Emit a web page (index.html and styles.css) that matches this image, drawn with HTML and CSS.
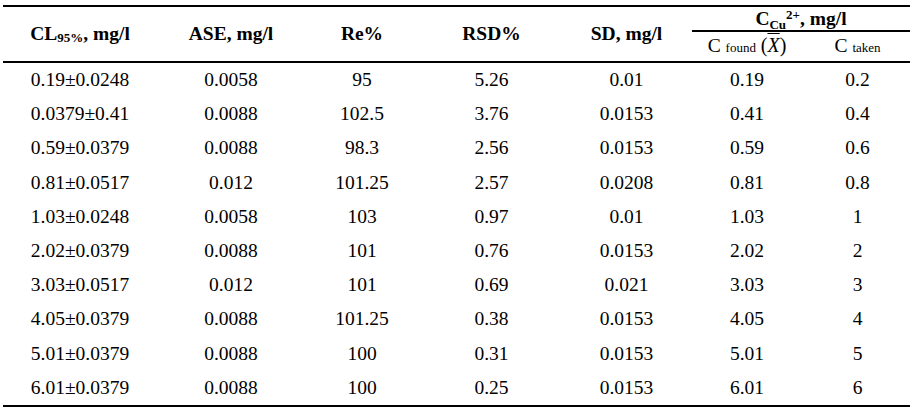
FILE: index.html
```html
<!DOCTYPE html>
<html>
<head>
<meta charset="utf-8">
<link rel="stylesheet" href="styles.css">
</head>
<body>
<table class="data">
  <colgroup>
    <col class="c1"><col class="c2"><col class="c3"><col class="c4"><col class="c5"><col class="c6"><col class="c7">
  </colgroup>
  <thead>
    <tr class="h1">
      <th rowspan="2">CL<sub class="sb">95%</sub>, mg/l</th>
      <th rowspan="2">ASE, mg/l</th>
      <th rowspan="2">Re%</th>
      <th rowspan="2">RSD%</th>
      <th rowspan="2">SD, mg/l</th>
      <th colspan="2" class="group"><div class="group-title">C<sub class="cu">Cu</sub><sup class="sp">2+</sup>, mg/l</div></th>
    </tr>
    <tr class="h2">
      <th class="sub">C <span class="small">found</span> <span class="math">(<span class="xbar">X</span>)</span></th>
      <th class="sub">C <span class="small">taken</span></th>
    </tr>
  </thead>
  <tbody>
    <tr><td>0.19±0.0248</td><td>0.0058</td><td>95</td><td>5.26</td><td>0.01</td><td>0.19</td><td>0.2</td></tr>
    <tr><td>0.0379±0.41</td><td>0.0088</td><td>102.5</td><td>3.76</td><td>0.0153</td><td>0.41</td><td>0.4</td></tr>
    <tr><td>0.59±0.0379</td><td>0.0088</td><td>98.3</td><td>2.56</td><td>0.0153</td><td>0.59</td><td>0.6</td></tr>
    <tr><td>0.81±0.0517</td><td>0.012</td><td>101.25</td><td>2.57</td><td>0.0208</td><td>0.81</td><td>0.8</td></tr>
    <tr><td>1.03±0.0248</td><td>0.0058</td><td>103</td><td>0.97</td><td>0.01</td><td>1.03</td><td>1</td></tr>
    <tr><td>2.02±0.0379</td><td>0.0088</td><td>101</td><td>0.76</td><td>0.0153</td><td>2.02</td><td>2</td></tr>
    <tr><td>3.03±0.0517</td><td>0.012</td><td>101</td><td>0.69</td><td>0.021</td><td>3.03</td><td>3</td></tr>
    <tr><td>4.05±0.0379</td><td>0.0088</td><td>101.25</td><td>0.38</td><td>0.0153</td><td>4.05</td><td>4</td></tr>
    <tr><td>5.01±0.0379</td><td>0.0088</td><td>100</td><td>0.31</td><td>0.0153</td><td>5.01</td><td>5</td></tr>
    <tr><td>6.01±0.0379</td><td>0.0088</td><td>100</td><td>0.25</td><td>0.0153</td><td>6.01</td><td>6</td></tr>
  </tbody>
</table>
</body>
</html>
```
FILE: styles.css
```css
html, body {
  margin: 0;
  padding: 0;
  background: #fff;
}
body {
  padding: 5px 0 0 3px;
  font-family: "Liberation Serif", "Times New Roman", serif;
  color: #000;
}
.data {
  border-collapse: collapse;
  table-layout: fixed;
  width: 907px;
  font-size: 19.5px;
  border-top: 2px solid #000;
  border-bottom: 2px solid #000;
}
.c1 { width: 154px; }
.c2 { width: 148px; }
.c3 { width: 114px; }
.c4 { width: 145px; }
.c5 { width: 125px; }
.c6 { width: 116px; }
.c7 { width: 105px; }

.data th, .data td {
  padding: 0;
  text-align: center;
  vertical-align: middle;
  white-space: nowrap;
}
.data thead tr.h2 th,
.data thead th[rowspan] {
  border-bottom: 2px solid #000;
}
.data thead th {
  font-weight: bold;
}
.h1 { height: 25px; }
.h2 { height: 28px; }
.group {
  padding: 0;
  vertical-align: bottom;
}
.group-title {
  margin-left: 3px;
  border-bottom: 2px solid #000;
  height: 23px;
  line-height: 23px;
}
.sb {
  font-size: 13px;
  line-height: 0;
  vertical-align: -2px;
}
.cu {
  font-size: 13px;
  line-height: 0;
  vertical-align: -4px;
}
.sp {
  font-size: 13px;
  line-height: 0;
  vertical-align: 6px;
}
.sub {
  font-weight: normal !important;
  line-height: 26px;
}
.small {
  font-size: 13px;
}
.math {
  font-size: 20px;
}
.xbar {
  font-style: italic;
  text-decoration: overline;
  text-decoration-thickness: 1px;
}
.data tbody td {
  height: 34.2px;
}
```
